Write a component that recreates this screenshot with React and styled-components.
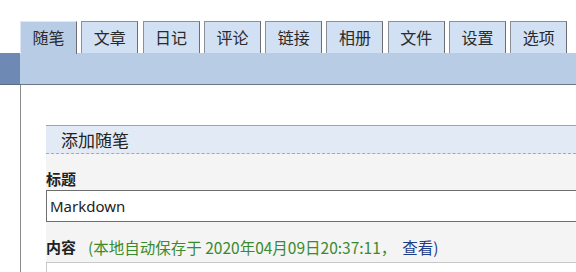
import React from 'react';
import styled, { createGlobalStyle } from 'styled-components';

const GlobalStyle = createGlobalStyle`
  body {
    margin: 0;
    background: #fff;
    font-family: "Noto Sans CJK SC", "Noto Sans", sans-serif;
    color: #333;
  }
`;

const Page = styled.div`
  width: 576px;
  height: 272px;
  overflow: hidden;
`;

const Header = styled.div`
  display: flex;
  padding-top: 21px;
`;

const Side = styled.div`
  width: 20px;
  height: 31px;
  margin-top: 32px;
  background: #6e89b4;
  border-bottom: 1px solid #5a6a86;
  flex-shrink: 0;
`;

const HeaderMain = styled.div`
  flex: 1;
  display: flex;
  flex-direction: column;
`;

const TabRow = styled.div`
  display: flex;
  gap: 4.3px;
  height: 32px;
`;

const Tab = styled.div`
  box-sizing: border-box;
  width: 57px;
  height: ${p => (p.active ? '33px' : '32px')};
  padding-bottom: ${p => (p.active ? '3px' : '2px')};
  display: flex;
  align-items: center;
  justify-content: center;
  font-size: 16px;
  color: #2a2a2a;
  background: ${p => (p.active ? '#b8cce6' : '#d2e0f3')};
  border: 1px solid #8a8f98;
  border-bottom: none;
  border-left-color: ${p => (p.active ? '#dfe7f3' : '#8a8f98')};
  border-top-color: ${p => (p.active ? '#dfe7f3' : '#8a8f98')};
  border-right-color: #6a6e76;
  position: relative;
  z-index: 1;
`;

const Band = styled.div`
  height: 31px;
  background: #b8cce6;
  border-bottom: 1px solid #6b7689;
`;

const Panel = styled.div`
  margin-left: 20px;
  border-left: 1px solid #8c8c8c;
  padding: 40px 0 0 25px;
  height: 200px;
`;

const Section = styled.div`
  border-top: 1px solid #a3a3a3;
`;

const SectionTitle = styled.div`
  height: 27px;
  background: #e2ebf5;
  border-bottom: 1px dashed #a9a9a9;
  display: flex;
  align-items: center;
  padding-left: 15px;
  font-size: 17px;
  color: #222;
`;

const Form = styled.div`
  background: #f4f4f4;
  padding-top: 14px;
  height: 200px;
`;

const Label = styled.div`
  font-size: 15px;
  font-weight: bold;
  color: #222;
  line-height: 22px;
  height: 22px;
  display: flex;
  align-items: center;
`;

const Input = styled.div`
  box-sizing: border-box;
  height: 32px;
  background: #fff;
  border: 1px solid #6e6e6e;
  border-right: none;
  padding-left: 3px;
  display: flex;
  align-items: center;
  font-family: "Noto Sans", "Noto Sans CJK SC", sans-serif;
  font-size: 15px;
  color: #222;
`;

const ContentRow = styled(Label)`
  margin-top: 14px;
`;

const Note = styled.span`
  font-weight: normal;
  font-size: 15.5px;
  color: ${p => (p.link ? '#1f3c88' : '#3a8a2e')};
  margin-left: ${p => (p.gap ? `${p.gap}px` : '0')};
`;

const Editor = styled.div`
  margin-top: 4px;
  height: 40px;
  background: #fff;
  border-top: 1px solid #c8c8c8;
  border-left: 1px solid #c8c8c8;
`;

const tabs = ['随笔', '文章', '日记', '评论', '链接', '相册', '文件', '设置', '选项'];

const App = () => (
  <Page>
    <GlobalStyle />
    <Header>
      <Side />
      <HeaderMain>
        <TabRow>
          {tabs.map((t, i) => (
            <Tab key={t} active={i === 0}>{t}</Tab>
          ))}
        </TabRow>
        <Band />
      </HeaderMain>
    </Header>
    <Panel>
      <Section>
        <SectionTitle>添加随笔</SectionTitle>
        <Form>
          <Label>标题</Label>
          <Input>Markdown</Input>
          <ContentRow>
            内容
            <Note gap={12}>(本地自动保存于 2020年04月09日20:37:11，</Note>
            <Note link gap={6}>查看)</Note>
          </ContentRow>
          <Editor />
        </Form>
      </Section>
    </Panel>
  </Page>
);

export default App;
